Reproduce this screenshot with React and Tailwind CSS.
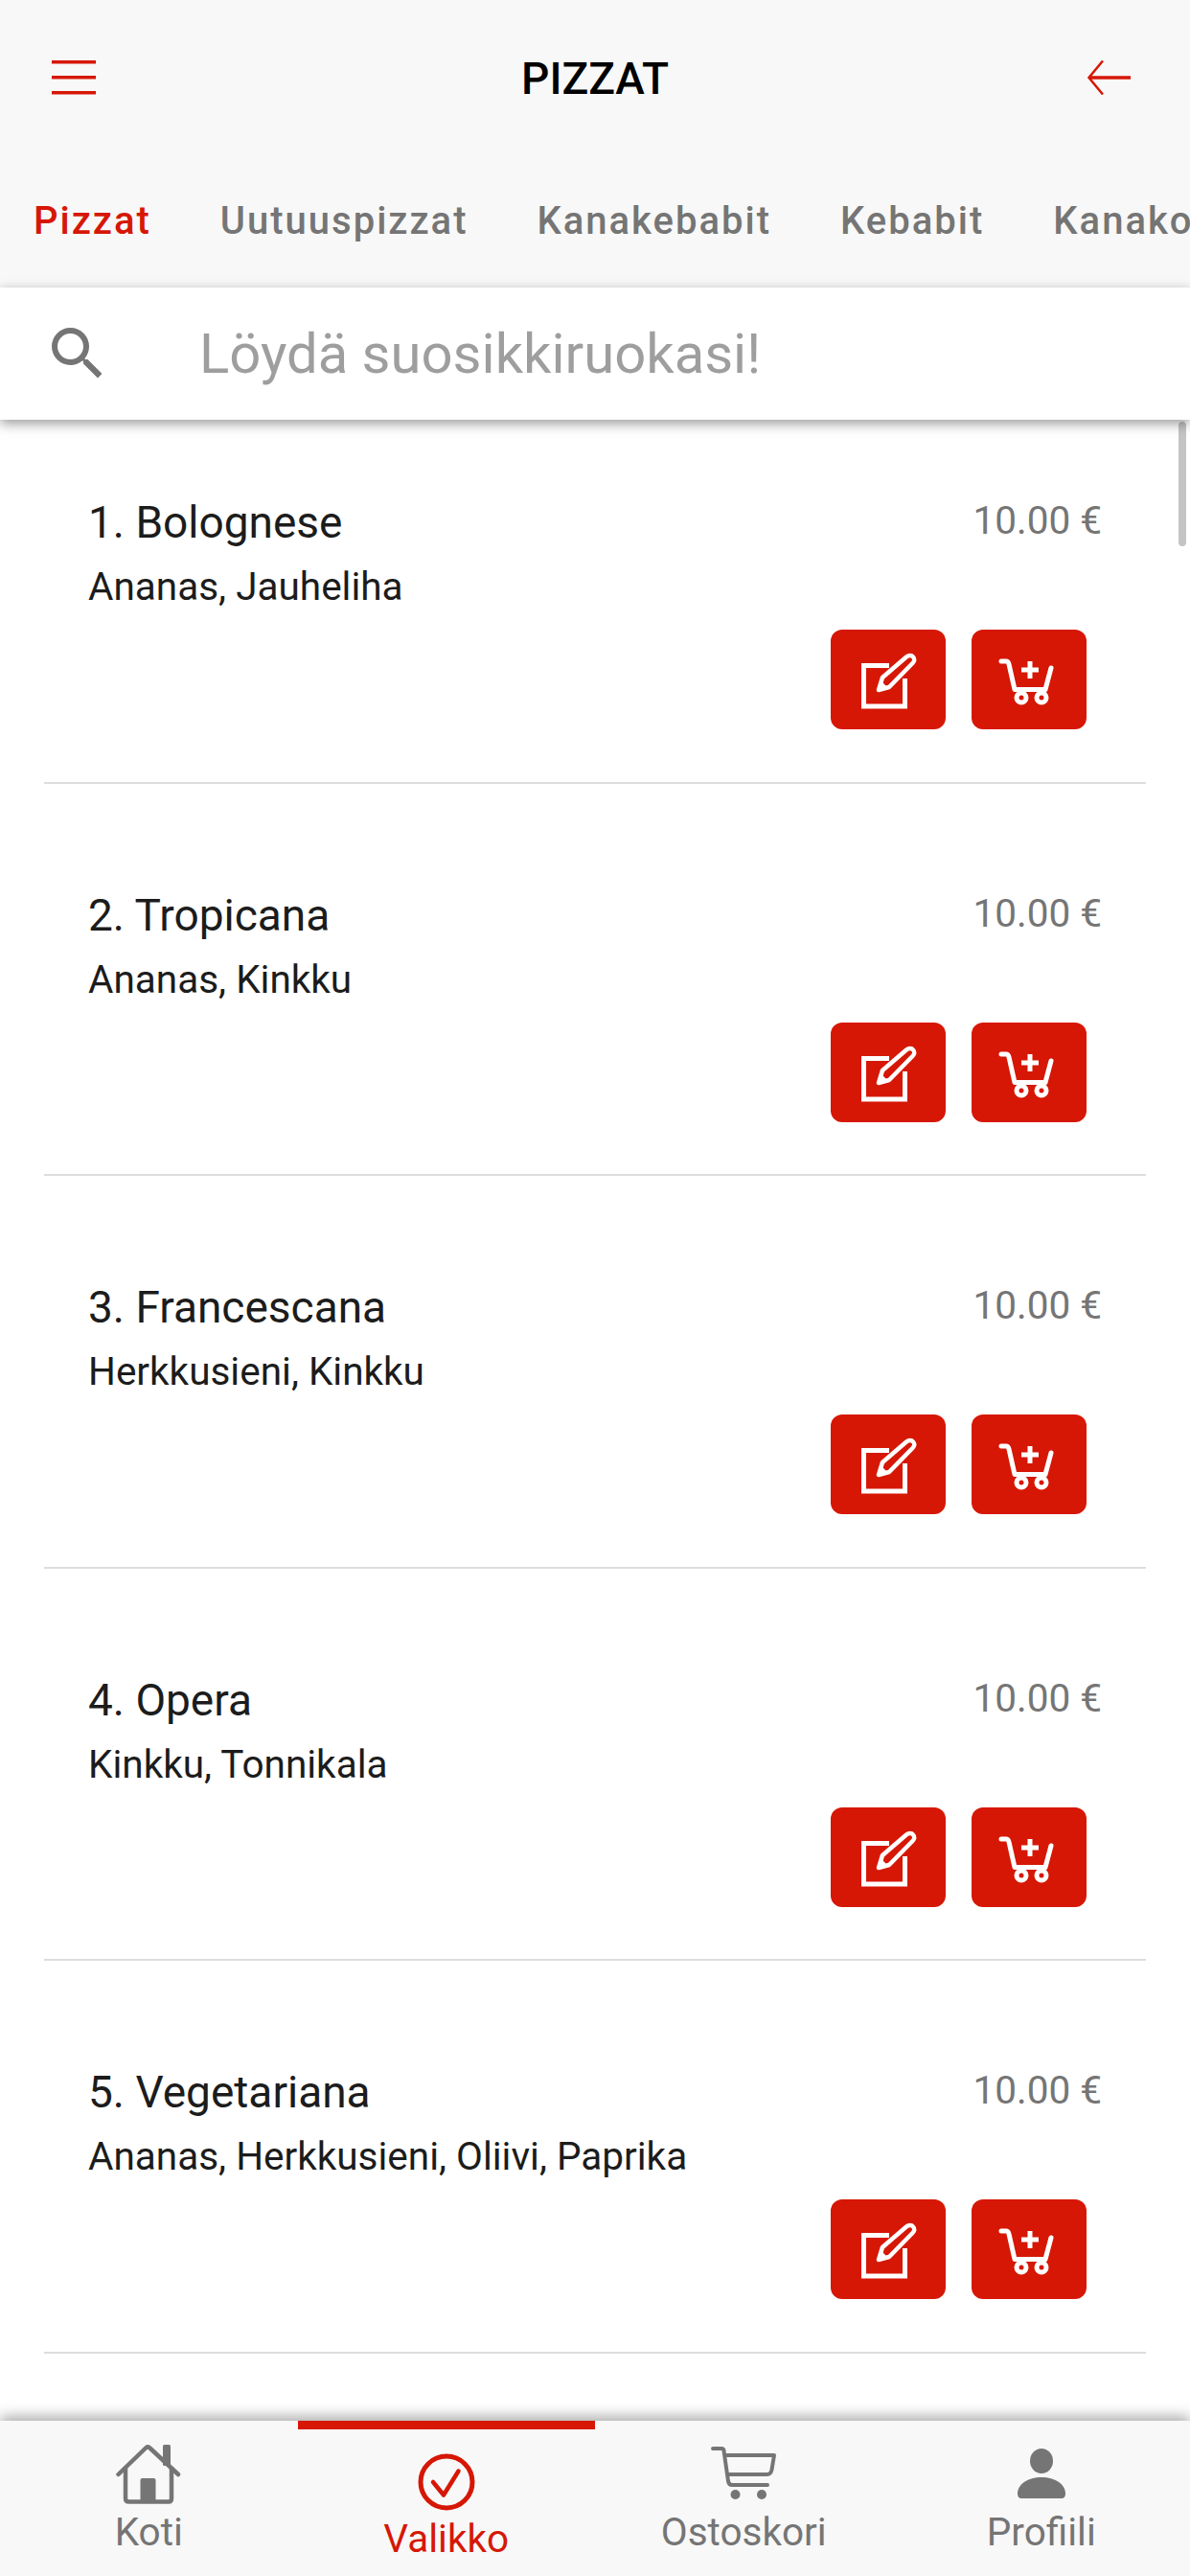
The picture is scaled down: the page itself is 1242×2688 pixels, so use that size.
import React from "react";

const tabs = ["Pizzat", "Uutuuspizzat", "Kanakebabit", "Kebabit", "Kanakokkeli"];

const pizzas = [
  { name: "1. Bolognese", toppings: "Ananas, Jauheliha" },
  { name: "2. Tropicana", toppings: "Ananas, Kinkku" },
  { name: "3. Francescana", toppings: "Herkkusieni, Kinkku" },
  { name: "4. Opera", toppings: "Kinkku, Tonnikala" },
  { name: "5. Vegetariana", toppings: "Ananas, Herkkusieni, Oliivi, Paprika" },
];

const EditIcon = () => (
  <svg width="120" height="104" viewBox="0 0 120 104" fill="none" stroke="white">
    <path d="M61 37.5H34.5V80H77.5V51" strokeWidth="5" />
    <path d="M50 63L54 50L79 28.5C81.5 26.5 84.5 26.5 86 28.5C88 30.5 87.5 33 85.5 35L61 60Z" strokeWidth="4.5" strokeLinejoin="round" />
    <path d="M50 63L52.5 55L57.5 60Z" fill="white" strokeWidth="2" />
  </svg>
);

const CartPlusIcon = () => (
  <svg width="120" height="104" viewBox="0 0 120 104" fill="none" stroke="white" strokeWidth="5">
    <path d="M31 33H36C38 33 38.5 34 39 36L45 62.5H77L83 40" strokeLinecap="round" strokeLinejoin="round" />
    <circle cx="52" cy="71" r="5" />
    <circle cx="73" cy="71" r="5" />
    <path d="M61 33V51M52 42H70" />
  </svg>
);

const PizzaRow = ({ pizza, first }) => (
  <div className={`relative mx-[46px] h-[379.5px] border-b-2 border-[#dddddd] ${first ? "" : "mt-[30px]"}`}>
    <div className="flex justify-between pl-[46px] pr-[46px] pt-[79px]">
      <div>
        <div className="text-[46px] leading-[56px] text-[#1c1c1c]">{pizza.name}</div>
        <div className="mt-[15px] text-[40.5px] leading-[48px] text-[#1c1c1c]">{pizza.toppings}</div>
      </div>
      <div className="mt-[1px] text-[40.5px] leading-[50px] text-[#757575]">10.00 €</div>
    </div>
    <div className="mt-[21px] flex justify-end gap-[27px] pr-[62px]">
      <button className="h-[104px] w-[120px] rounded-[12px] bg-[#d61705]">
        <EditIcon />
      </button>
      <button className="h-[104px] w-[120px] rounded-[12px] bg-[#d61705]">
        <CartPlusIcon />
      </button>
    </div>
  </div>
);

const NavItem = ({ label, active, children }) => (
  <div className="flex flex-col items-center">
    <div className={`h-[9px] w-[310px] ${active ? "bg-[#d61705]" : ""}`} />
    <div className="flex h-[85px] items-start justify-center">{children}</div>
    <div className={`text-[40.5px] leading-[44px] ${active ? "mt-[7px] text-[#d61705]" : "mt-0 text-[#757575]"}`}>
      {label}
    </div>
  </div>
);

export default function App() {
  return (
    <div className="relative flex h-[2688px] w-[1242px] flex-col overflow-hidden bg-white font-['Roboto',sans-serif]">
      <header className="h-[300px] shrink-0 bg-[#f8f8f8]">
        <div className="flex h-[164px] items-center justify-between px-[54px] pr-[62px]">
          <svg width="46" height="36" viewBox="0 0 46 36" className="mt-[-2px]" fill="#d61705">
            <rect y="0" width="46" height="3.5" />
            <rect y="16" width="46" height="3.5" />
            <rect y="32" width="46" height="3.5" />
          </svg>
          <div className="ml-[8px] text-[46px] font-medium leading-none text-black">PIZZAT</div>
          <svg width="46" height="36" viewBox="0 0 46 36" className="mt-[-2px]" fill="none" stroke="#d61705" strokeWidth="3.5">
            <path d="M46 18H3" />
            <path d="M17 0.5L2.5 18L17 35.5" strokeWidth="2.5" />
          </svg>
        </div>
        <div className="flex gap-[72px] overflow-hidden whitespace-nowrap pl-[35px] pt-[43px] text-[40px] font-medium leading-[48px] tracking-[2px] text-[#757575]">
          {tabs.map((tab, i) => (
            <span key={tab} className={i === 0 ? "text-[#d61705]" : ""}>{tab}</span>
          ))}
        </div>
      </header>

      <div className="relative z-10 flex h-[138px] shrink-0 items-center bg-white shadow-[0_4px_12px_rgba(0,0,0,0.4)]">
        <svg width="72" height="72" viewBox="0 0 24 24" className="ml-[45px]" fill="#757575">
          <path d="M15.5 14h-.79l-.28-.27A6.47 6.47 0 0 0 16 9.5 6.5 6.5 0 1 0 9.5 16c1.61 0 3.09-.59 4.23-1.57l.27.28v.79l5 4.99L20.49 19l-4.99-5zm-6 0C7.01 14 5 11.99 5 9.5S7.01 5 9.5 5 14 7.01 14 9.5 11.99 14 9.5 14z" />
        </svg>
        <div className="ml-[91px] text-[58px] leading-none text-[#9e9e9e]">Löydä suosikkiruokasi!</div>
      </div>

      <main className="relative flex-1 overflow-hidden">
        {pizzas.map((pizza, i) => (
          <PizzaRow key={pizza.name} pizza={pizza} first={i === 0} />
        ))}
        <div className="absolute right-[4px] top-[2px] h-[130px] w-[8px] rounded-full bg-[#c4c4c4]" />
      </main>

      <nav className="relative z-10 grid h-[162px] shrink-0 grid-cols-4 justify-items-center bg-[#f8f8f8] shadow-[0_-4px_14px_rgba(0,0,0,0.35)]">
        <NavItem label="Koti">
          <svg width="68" height="62" viewBox="0 0 68 62" className="mt-[16px]" fill="none" stroke="#757575" strokeWidth="4.5">
            <path d="M2.5 31L31 3.5C32.5 2 34 2 35.5 3.5L65 31" strokeLinecap="round" strokeLinejoin="round" />
            <rect x="49" y="0" width="8" height="22" rx="1.5" fill="#757575" stroke="none" />
            <path d="M10 23V56C10 58.5 11 59.5 13.5 59.5H55C57 59.5 58 58.5 58 56V23" />
            <rect x="25.5" y="35" width="16" height="25" rx="2" fill="#757575" stroke="none" />
          </svg>
        </NavItem>
        <NavItem label="Valikko" active>
          <svg width="60" height="60" viewBox="0 0 60 60" className="mt-[25px]" fill="none" stroke="#d61705">
            <circle cx="30" cy="30" r="27" strokeWidth="5" />
            <path d="M16 30L27 43.5L42.5 18.5" strokeWidth="4.5" strokeLinecap="round" strokeLinejoin="round" />
          </svg>
        </NavItem>
        <NavItem label="Ostoskori">
          <svg width="68" height="58" viewBox="0 0 68 58" className="mt-[18px]" fill="none" stroke="#757575" strokeWidth="4">
            <path d="M2 2H11C12.5 2 13.5 3 13.5 4.5L18 36C18.5 38.5 20 40 22 40H59" strokeLinecap="round" strokeLinejoin="round" />
            <path d="M14.5 9H66L63.5 24C63 27 61.5 29 58.5 29H17" strokeLinejoin="round" />
            <circle cx="25.5" cy="50" r="5" fill="#757575" stroke="none" />
            <circle cx="53" cy="50" r="5" fill="#757575" stroke="none" />
          </svg>
        </NavItem>
        <NavItem label="Profiili">
          <svg width="50" height="52" viewBox="0 0 50 52" className="mt-[20px]" fill="#757575">
            <ellipse cx="25" cy="13" rx="12" ry="13" />
            <path d="M0 47C0 37 11 30 25 30C39 30 50 37 50 47C50 50.5 48.5 52 46 52H4C1.5 52 0 50.5 0 47Z" />
          </svg>
        </NavItem>
      </nav>
    </div>
  );
}
